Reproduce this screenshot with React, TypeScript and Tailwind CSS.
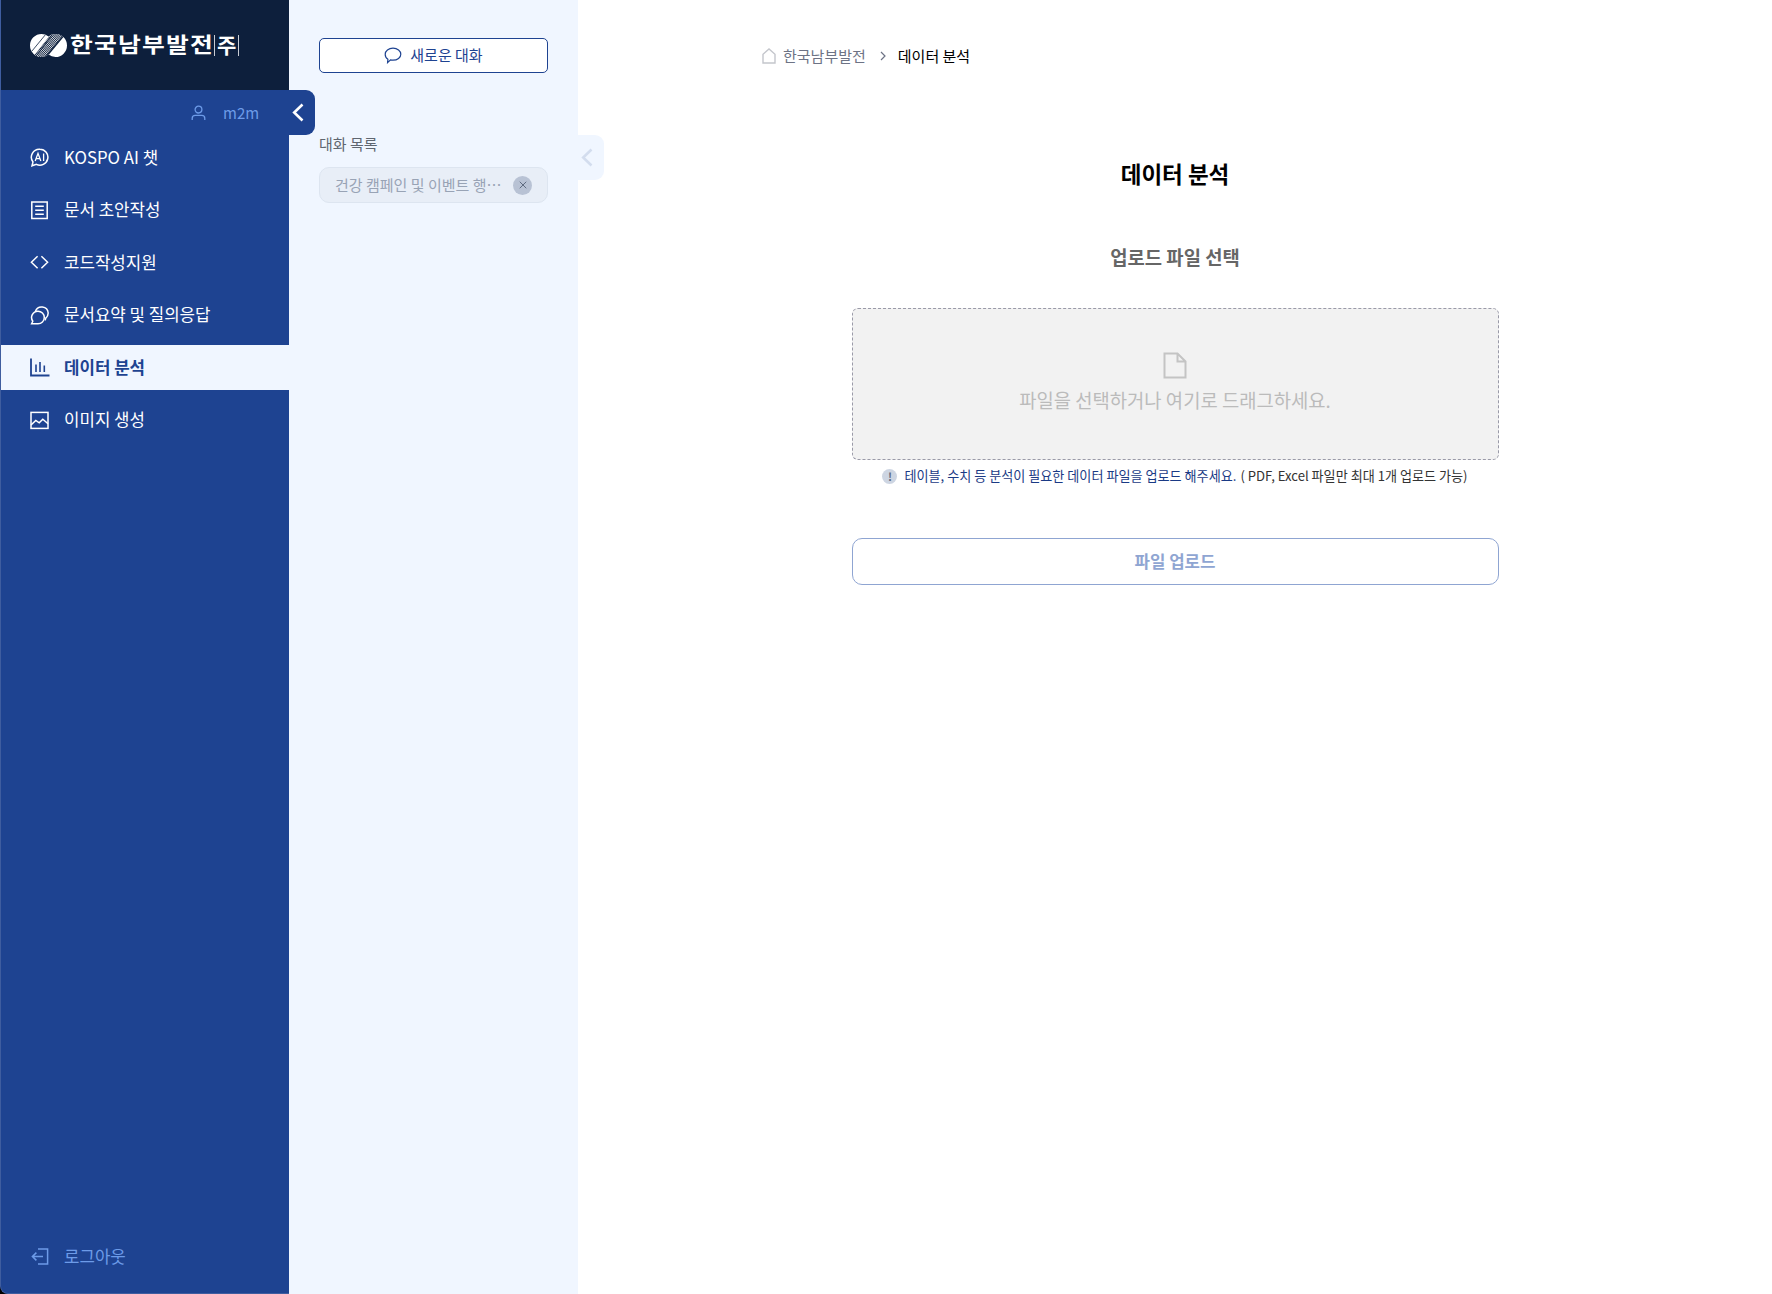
import { X } from "lucide-react";

const Logo = () => (
  <div className="flex items-center">
    <svg width="37" height="23" viewBox="0 0 37 23" className="shrink-0">
      <defs>
        <pattern id="hatch" width="1.4" height="1.4" patternUnits="userSpaceOnUse" patternTransform="rotate(-40)">
          <rect width="1.4" height="0.6" fill="#ffffff" />
        </pattern>
        <clipPath id="pair">
          <circle cx="11.5" cy="11.5" r="11.5" />
          <circle cx="25.5" cy="11.5" r="11.5" />
        </clipPath>
      </defs>
      <g clipPath="url(#pair)">
        <rect width="37" height="23" fill="#ffffff" />
        <path d="M3 23 21 0h13L16 23Z" fill="#0d1f3c" />
        <path d="M3 23 21 0h13L16 23Z" fill="url(#hatch)" />
        <path d="m2 17 14-17M7 21 22 1" stroke="#0d1f3c" strokeWidth="0.8" />
        <path d="M16 23 35 0" stroke="#0d1f3c" strokeWidth="1.4" />
      </g>
    </svg>
    <span className="mr-[22px] mb-[3px] ml-[3px] inline-block origin-left scale-x-[1.18] text-[21px] leading-none font-bold tracking-[1px] text-white">한국남부발전</span>
    <span className="flex items-center border-x border-[#c8ccd4] px-[2px] pb-[3px] text-[21px] leading-[18px] font-bold text-white">주</span>
  </div>
);

const icons: Record<string, React.ReactNode> = {
  ai: (
    <>
      <path d="M10 1.200a8 8 0 1 1-3.600 15.200L2 17.800l1-3.800A8 8 0 0 1 10 1.200Z" />
      <path d="M5.200 13 8 5.400 10.800 13M6.100 10.600h3.800M13.600 5.400V13" strokeWidth="1.300" />
    </>
  ),
  doc: (
    <>
      <rect x="1.800" y="1" width="15.400" height="16.500" />
      <path d="M5.200 5.200h8.600M5.200 9.200h8.600M5.200 13.200h8.600" />
    </>
  ),
  code: <path d="M7.600 3.200 1.400 9.200l6.200 6M11.400 3.200l6.200 6-6.200 6" />,
  summary: (
    <>
      <path d="M8 5.200a6.300 6.300 0 1 1 0 12.600H1.600l1.200-2.600A6.300 6.300 0 0 1 8 5.200Z" />
      <path d="M5.400 5.400A6.600 6.600 0 0 1 18.200 7c0 2.400-1 4-2.600 5.400l-.4 2" />
    </>
  ),
  chart: (
    <>
      <path d="M1 .5v17h18.500" strokeWidth="1.800" />
      <path d="M6 6.500v7.500M10 4v10M14.300 7.500V14" strokeWidth="1.600" />
    </>
  ),
  image: (
    <>
      <rect x="1" y="1.400" width="17" height="16" />
      <path d="m1 14 4.800-4.600 3.400 2.400 3.600-3.600 5.200 4.600" />
    </>
  ),
};

const NavIcon = ({ name }: { name: string }) => (
  <svg width="20" height="19" viewBox="0 0 20 19" fill="none" stroke="currentColor" strokeWidth="1.500" className="shrink-0">
    {icons[name]}
  </svg>
);

const menu = [
  { icon: "ai", label: "KOSPO AI 챗" },
  { icon: "doc", label: "문서 초안작성" },
  { icon: "code", label: "코드작성지원" },
  { icon: "summary", label: "문서요약 및 질의응답" },
  { icon: "chart", label: "데이터 분석", active: true },
  { icon: "image", label: "이미지 생성" },
];

const Chevron = () => (
  <svg width="12" height="19" viewBox="0 0 12 19" fill="none" stroke="currentColor" strokeWidth="2.600">
    <path d="M10.500 1.500 2.200 9.500l8.300 8" />
  </svg>
);

const App = () => {
  return (
    <div className="flex h-[1294px] w-[1772px] overflow-hidden bg-black font-['Noto_Sans_CJK_KR','Noto_Sans',sans-serif]">
      {/* main sidebar */}
      <aside className="relative z-10 flex w-[289px] shrink-0 flex-col rounded-bl-[8px] border-b border-l border-[#3f5d9f] bg-[#1e4391]">
        <div className="flex h-[90px] shrink-0 items-center bg-[#0d1f3c] pl-[29px]">
          <Logo />
        </div>
        <div className="flex h-[45px] shrink-0 items-center pl-[190px] text-[#6d9be8]">
          <svg width="15" height="16" viewBox="0 0 15 16" fill="none" stroke="currentColor" strokeWidth="1.300">
            <circle cx="7.500" cy="4.600" r="3.400" />
            <path d="M1.200 15v-1.600c0-1.800 1.400-3 3-3h6.600c1.600 0 3 1.200 3 3V15" />
          </svg>
          <span className="ml-[17px] pt-[1px] text-[15px]">m2m</span>
        </div>
        <button className="absolute top-[90px] left-[288px] flex h-[45px] w-[26px] items-center rounded-r-[9px] bg-[#1e4391] pl-[3px] text-white">
          <Chevron />
        </button>
        <nav className="flex flex-col gap-[7.5px]">
          {menu.map((m) => (
            <div
              key={m.label}
              className={`flex h-[45px] items-center gap-[14px] pl-[29px] text-[16.8px] ${
                m.active ? "bg-[#f0f6ff] font-bold text-[#1e4391]" : "text-white"
              }`}
            >
              <NavIcon name={m.icon} />
              <span>{m.label}</span>
            </div>
          ))}
        </nav>
        <div className="mt-auto mb-[14px] flex h-[45px] items-center gap-[14px] pl-[29px] text-[16.8px] text-[#6d9be8]">
          <svg width="20" height="19" viewBox="0 0 20 19" fill="none" stroke="currentColor" strokeWidth="1.500">
            <path d="M8 2h9.600v15H8M13 9.500H2.400M6.400 5.600 2.400 9.500l4 3.900" />
          </svg>
          <span>로그아웃</span>
        </div>
      </aside>

      {/* chat list panel */}
      <section className="relative flex w-[289px] shrink-0 flex-col bg-[#f0f6ff] px-[30px] pt-[38px]">
        <button className="flex h-[35px] w-[229px] items-center justify-center gap-[8px] rounded-[5px] border border-[#1e4391] bg-white pb-[1px] text-[15px] text-[#1e4391]">
          <svg width="18" height="17" viewBox="0 0 18 17" fill="none" stroke="currentColor" strokeWidth="1.200">
            <path d="M9 1.200c4.400 0 7.800 2.600 7.800 6s-3.400 6-7.800 6c-.9 0-1.700-.1-2.500-.3L3.600 15.600l.3-3.400C2.200 11.100 1.200 9.300 1.200 7.200c0-3.400 3.400-6 7.800-6Z" />
          </svg>
          새로운 대화
        </button>
        <p className="mt-[60px] h-[22px] text-[15px] leading-[22px] text-[#5f6670]">대화 목록</p>
        <div className="mt-[12px] flex h-[36px] w-[229px] items-center justify-between rounded-[10px] border border-[#dde5f0] bg-[#e8eef7] px-[15px]">
          <span className="w-[168px] truncate text-[15px] text-[#98a3b5]">건강 캠페인 및 이벤트 행사 기획안 작성</span>
          <span className="flex h-[19px] w-[19px] items-center justify-center rounded-full bg-[#b8c2d4] text-[#5f6b80]">
            <X size={12} strokeWidth={2} />
          </span>
        </div>
        <button className="absolute top-[135px] left-[289px] flex h-[45px] w-[26px] items-center rounded-r-[9px] bg-[#f0f6ff] pl-[3px] text-[#d3ddee]">
          <Chevron />
        </button>
      </section>

      {/* main content */}
      <main className="flex min-w-0 flex-1 flex-col items-center bg-white">
        <div className="flex h-[112px] w-full items-center pl-[184px] text-[15px]">
          <svg width="14" height="16" viewBox="0 0 14 16" fill="none" stroke="#c4c6cc" strokeWidth="1.400">
            <path d="M1 15V6.200L7 1l6 5.200V15Z" />
          </svg>
          <span className="ml-[7px] text-[#6d7385]">한국남부발전</span>
          <span className="mr-[11px] ml-[13px] text-[#6d7385]">
            <svg width="8" height="10" viewBox="0 0 8 10" fill="none" stroke="currentColor" strokeWidth="1.200">
              <path d="m2 1 4 4-4 4" />
            </svg>
          </span>
          <span className="text-black">데이터 분석</span>
        </div>
        <h1 className="mt-[43px] text-[22.5px] leading-[36px] font-bold text-black">데이터 분석</h1>
        <h2 className="mt-[52px] text-[18.8px] leading-[28px] font-bold text-[#666666]">업로드 파일 선택</h2>
        <div className="mt-[37px] flex h-[152px] w-[647px] flex-col items-center justify-center rounded-[6px] border border-dashed border-[#9a9aa8] bg-[#f2f2f2]">
          <svg width="24" height="27" viewBox="0 0 24 27" fill="none" stroke="#c4c4c4" strokeWidth="2">
            <path d="M1.500 1.500h13l8 8v16h-21ZM14.500 1.500v8h8" />
          </svg>
          <p className="mt-[5px] text-[18.8px] leading-[32px] text-[#bbbbbb]">파일을 선택하거나 여기로 드래그하세요.</p>
        </div>
        <div className="mt-[6px] flex h-[20px] items-center text-[13.1px]">
          <span className="mr-[7px] flex h-[15px] w-[15px] items-center justify-center rounded-full bg-[#cdd5e2] text-[11px] font-bold text-[#5f6b80]">!</span>
          <span className="text-[#1a3a85]">테이블, 수치 등 분석이 필요한 데이터 파일을 업로드 해주세요.</span>
          <span className="ml-[4px] text-[#333333]">( PDF, Excel 파일만 최대 1개 업로드 가능)</span>
        </div>
        <button className="mt-[52px] h-[47px] w-[647px] rounded-[10px] border border-[#8fa5d2] bg-white pt-[1px] text-[16.8px] font-bold text-[#8fa5d2]">
          파일 업로드
        </button>
      </main>
    </div>
  );
};

export default App;
